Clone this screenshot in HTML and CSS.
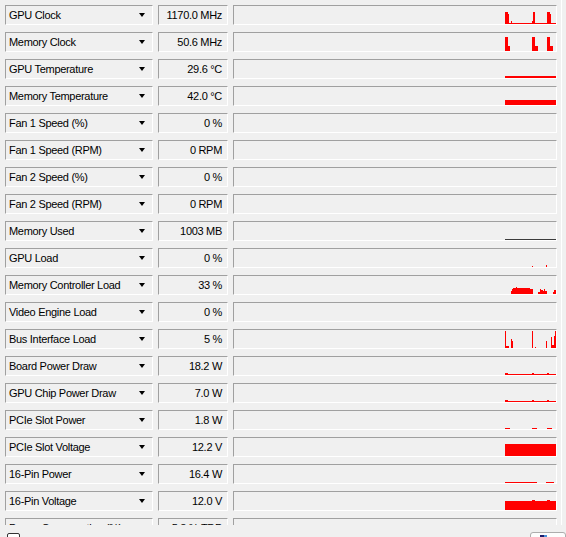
FILE: index.html
```html
<!DOCTYPE html>
<html>
<head>
<meta charset="utf-8">
<link rel="stylesheet" href="styles.css">
</head>
<body>
<div class="panel">
  <div class="row"><div class="name">GPU Clock<span class="arrow"></span></div><div class="value">1170.0 MHz</div><div class="graph"><svg width="322" height="18"><g fill="#ff0000"><rect x="271" y="17" width="51" height="1"/><rect x="271" y="6" width="3" height="12"/><rect x="274" y="8" width="1" height="10"/><rect x="277" y="15" width="1" height="3"/><rect x="298" y="15" width="3" height="3"/><rect x="299" y="6" width="2" height="12"/><rect x="313" y="6" width="3" height="12"/><rect x="316" y="8" width="1" height="10"/></g></svg></div></div>
  <div class="row"><div class="name">Memory Clock<span class="arrow"></span></div><div class="value">50.6 MHz</div><div class="graph"><svg width="322" height="18"><g fill="#ff0000"><rect x="271" y="4" width="3" height="14"/><rect x="274" y="13" width="2" height="5"/><rect x="298" y="4" width="3" height="14"/><rect x="301" y="13" width="3" height="5"/><rect x="313" y="4" width="3" height="14"/><rect x="316" y="13" width="3" height="5"/></g></svg></div></div>
  <div class="row"><div class="name">GPU Temperature<span class="arrow"></span></div><div class="value">29.6 °C</div><div class="graph"><svg width="322" height="18"><rect fill="#ff0000" x="271" y="16" width="51" height="2"/></svg></div></div>
  <div class="row"><div class="name">Memory Temperature<span class="arrow"></span></div><div class="value">42.0 °C</div><div class="graph"><svg width="322" height="18"><rect fill="#ff0000" x="271" y="13" width="51" height="5"/></svg></div></div>
  <div class="row"><div class="name">Fan 1 Speed (%)<span class="arrow"></span></div><div class="value">0 %</div><div class="graph"></div></div>
  <div class="row"><div class="name">Fan 1 Speed (RPM)<span class="arrow"></span></div><div class="value">0 RPM</div><div class="graph"></div></div>
  <div class="row"><div class="name">Fan 2 Speed (%)<span class="arrow"></span></div><div class="value">0 %</div><div class="graph"></div></div>
  <div class="row"><div class="name">Fan 2 Speed (RPM)<span class="arrow"></span></div><div class="value">0 RPM</div><div class="graph"></div></div>
  <div class="row"><div class="name">Memory Used<span class="arrow"></span></div><div class="value">1003 MB</div><div class="graph"><svg width="322" height="18"><rect fill="#3c3c3c" x="271" y="17" width="51" height="1"/></svg></div></div>
  <div class="row"><div class="name">GPU Load<span class="arrow"></span></div><div class="value">0 %</div><div class="graph"><svg width="322" height="18"><g fill="#ff0000"><rect x="298" y="17" width="1" height="1"/><rect x="312" y="16" width="1" height="2"/></g></svg></div></div>
  <div class="row"><div class="name">Memory Controller Load<span class="arrow"></span></div><div class="value">33 %</div><div class="graph"><svg width="322" height="18"><g fill="#ff0000"><rect x="277" y="15" width="1" height="3"/><rect x="278" y="13" width="1" height="5"/><rect x="279" y="12" width="3" height="6"/><rect x="282" y="11" width="1" height="7"/><rect x="283" y="12" width="13" height="6"/><rect x="296" y="13" width="3" height="5"/><rect x="304" y="16" width="2" height="2"/><rect x="306" y="13" width="1" height="5"/><rect x="307" y="14" width="2" height="4"/><rect x="309" y="15" width="1" height="3"/><rect x="310" y="13" width="1" height="5"/><rect x="311" y="15" width="2" height="3"/><rect x="319" y="16" width="1" height="2"/><rect x="320" y="14" width="2" height="4"/></g></svg></div></div>
  <div class="row"><div class="name">Video Engine Load<span class="arrow"></span></div><div class="value">0 %</div><div class="graph"></div></div>
  <div class="row"><div class="name">Bus Interface Load<span class="arrow"></span></div><div class="value">5 %</div><div class="graph"><svg width="322" height="18"><g fill="#ff0000"><rect x="271" y="1" width="1" height="17"/><rect x="272" y="16" width="2" height="2"/><rect x="274" y="16" width="1" height="2"/><rect x="277" y="9" width="1" height="9"/><rect x="278" y="11" width="1" height="7"/><rect x="298" y="1" width="1" height="17"/><rect x="301" y="17" width="1" height="1"/><rect x="312" y="11" width="1" height="7"/><rect x="317" y="7" width="1" height="11"/><rect x="318" y="15" width="2" height="3"/><rect x="320" y="6" width="1" height="12"/><rect x="321" y="1" width="1" height="17"/></g></svg></div></div>
  <div class="row"><div class="name">Board Power Draw<span class="arrow"></span></div><div class="value">18.2 W</div><div class="graph"><svg width="322" height="18"><g fill="#ff0000"><rect x="271" y="17" width="51" height="1"/><rect x="271" y="16" width="3" height="1"/><rect x="298" y="16" width="2" height="1"/><rect x="313" y="16" width="2" height="1"/></g></svg></div></div>
  <div class="row"><div class="name">GPU Chip Power Draw<span class="arrow"></span></div><div class="value">7.0 W</div><div class="graph"><svg width="322" height="18"><g fill="#ff0000"><rect x="271" y="17" width="51" height="1"/><rect x="271" y="16" width="3" height="1"/><rect x="298" y="16" width="2" height="1"/><rect x="313" y="16" width="2" height="1"/></g></svg></div></div>
  <div class="row"><div class="name">PCIe Slot Power<span class="arrow"></span></div><div class="value">1.8 W</div><div class="graph"><svg width="322" height="18"><g fill="#ff0000"><rect x="271" y="17" width="5" height="1"/><rect x="298" y="17" width="5" height="1"/><rect x="313" y="17" width="5" height="1"/></g></svg></div></div>
  <div class="row"><div class="name">PCIe Slot Voltage<span class="arrow"></span></div><div class="value">12.2 V</div><div class="graph"><svg width="322" height="18"><rect fill="#ff0000" x="271" y="6" width="51" height="12"/></svg></div></div>
  <div class="row"><div class="name">16-Pin Power<span class="arrow"></span></div><div class="value">16.4 W</div><div class="graph"><svg width="322" height="18"><g fill="#ff0000"><rect x="271" y="17" width="32" height="1"/><rect x="312" y="17" width="8" height="1"/></g></svg></div></div>
  <div class="row"><div class="name">16-Pin Voltage<span class="arrow"></span></div><div class="value">12.0 V</div><div class="graph"><svg width="322" height="18"><g fill="#ff0000"><rect x="271" y="9" width="51" height="9"/><rect x="298" y="8" width="3" height="1"/><rect x="313" y="8" width="3" height="1"/></g></svg></div></div>
  <div class="row"><div class="name">Power Consumption (%)<span class="arrow"></span></div><div class="value">5.8 % TDP</div><div class="graph"></div></div>
</div>
<div class="bottom">
  <label class="log"><span class="check"></span><span class="log-text">Log to file</span></label>
  <div class="btn"><span class="btn-icon"></span></div>
</div>
</body>
</html>
```
FILE: styles.css
```css
html, body {
  margin: 0;
  padding: 0;
  background: #f0f0f0;
  width: 566px;
  height: 537px;
  overflow: hidden;
  font-family: "Liberation Sans", Arial, sans-serif;
  font-size: 11px;
  letter-spacing: -0.3px;
  color: #000;
}

.panel {
  width: 562px;
  height: 525px;
  border-right: 1px solid #ffffff;
  overflow: hidden;
  padding-top: 5px;
  box-sizing: border-box;
}

.row {
  display: flex;
  gap: 5px;
  height: 20px;
  margin: 0 0 7px 5px;
}

.name, .value, .graph {
  box-sizing: border-box;
  height: 20px;
  border: 1px solid;
  border-color: #a0a0a0 #ffffff #ffffff #a0a0a0;
}

.name {
  width: 148px;
  position: relative;
  padding: 2px 0 0 3px;
  line-height: 14px;
  white-space: nowrap;
}

.arrow {
  position: absolute;
  left: 133px;
  top: 7px;
  width: 0;
  height: 0;
  border-left: 3.5px solid transparent;
  border-right: 3.5px solid transparent;
  border-top: 4px solid #000;
}

.value {
  width: 70px;
  text-align: right;
  padding: 2px 5px 0 0;
  line-height: 14px;
  white-space: nowrap;
}

.graph {
  width: 324px;
}

.graph svg {
  display: block;
}

.bottom {
  display: flex;
  align-items: flex-start;
  height: 12px;
  overflow: hidden;
  padding-left: 7px;
}

.log {
  display: flex;
  gap: 3px;
  margin-top: 8px;
}

.check {
  width: 13px;
  height: 13px;
  box-sizing: border-box;
  border: 1px solid #333;
  border-radius: 2px;
  background: #fff;
}

.log-text {
  line-height: 13px;
  padding-top: 2px;
}

.btn {
  margin-left: auto;
  margin-top: 7px;
  width: 36px;
  height: 22px;
  box-sizing: border-box;
  border: 1px solid #adadad;
  border-radius: 3px;
  background: #fdfdfd;
  position: relative;
}

.btn-icon {
  position: absolute;
  left: 9px;
  top: 2px;
  width: 4px;
  height: 4px;
  background: #1c1c6c;
  box-shadow: 3px 0 0 #4a90d9;
}
```
